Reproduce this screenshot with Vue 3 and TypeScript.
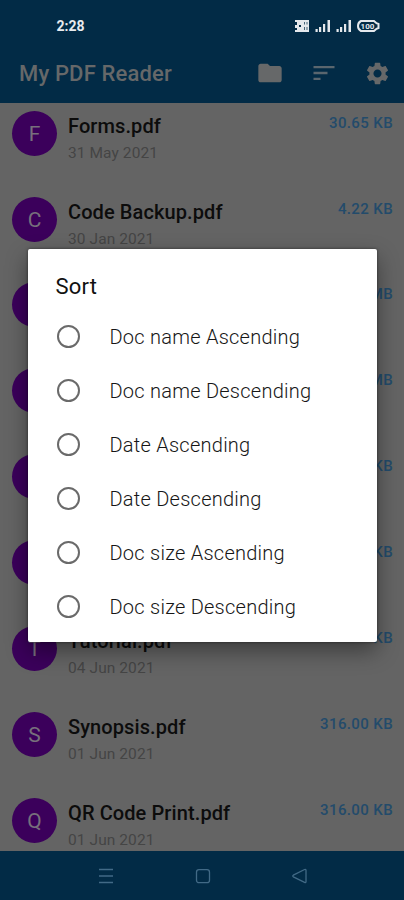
<script setup lang="ts">
interface Doc {
  initial: string
  name: string
  date: string
  size: string
}

const docs: Doc[] = [
  { initial: 'F', name: 'Forms.pdf', date: '31 May 2021', size: '30.65 KB' },
  { initial: 'C', name: 'Code Backup.pdf', date: '30 Jan 2021', size: '4.22 KB' },
  { initial: '', name: '', date: '', size: 'MB' },
  { initial: '', name: '', date: '', size: 'MB' },
  { initial: '', name: '', date: '', size: 'KB' },
  { initial: '', name: '', date: '', size: 'KB' },
  { initial: 'T', name: 'Tutorial.pdf', date: '04 Jun 2021', size: 'KB' },
  { initial: 'S', name: 'Synopsis.pdf', date: '01 Jun 2021', size: '316.00 KB' },
  { initial: 'Q', name: 'QR Code Print.pdf', date: '01 Jun 2021', size: '316.00 KB' },
]

const options: string[] = [
  'Doc name Ascending',
  'Doc name Descending',
  'Date Ascending',
  'Date Descending',
  'Doc size Ascending',
  'Doc size Descending',
]
</script>

<template>
  <div class="screen">
    <header class="top">
      <div class="status">
        <span class="clock">2:28</span>
        <svg class="indicators" width="88" height="16" viewBox="0 0 88 16">
          <g fill="#e4e8ec">
            <path d="M1 2h6v5H5v2h2v5H1v-2h2v-2H1V7h2V4H1z" />
            <path d="M7 2h8v12H7z" />
            <path d="M21.500 11h2.200v3h-2.200zM25 9h2.200v5H25zM29 6h2.200v8H29zM33.500 2H36v12h-2.500z" />
            <path d="M42.500 11h2.200v3h-2.200zM46 9h2.200v5H46zM50 6h2.200v8H50zM54.500 2H57v12h-2.500z" />
          </g>
          <path d="M10.500 4v2.500M13 4v2.500M10.500 9v3M13 9v3" stroke="#022b46" stroke-width=".7" />
          <path d="M67 3h13l2.500 2.200 2 .8v4l-2 .8L80 13H67q-3-1.500-3-5t3-5z" fill="none" stroke="#e4e8ec" stroke-width="2" />
          <text x="73.500" y="11" text-anchor="middle" font-size="8" font-weight="700" fill="#e4e8ec">100</text>
        </svg>
      </div>
      <div class="toolbar">
        <h1 class="title">My PDF Reader</h1>
        <div class="actions">
          <svg width="28" height="28" viewBox="0 0 24 24"><path fill="#666869" d="M10 4H4c-1.100 0-1.990.9-1.990 2L2 18c0 1.100.9 2 2 2h16c1.100 0 2-.9 2-2V8c0-1.100-.9-2-2-2h-8l-2-2z" /></svg>
          <svg width="28" height="28" viewBox="0 0 24 24"><path fill="#5a666e" d="M3 18h6v-2H3v2zM3 6v2h18V6H3zm0 7h12v-2H3v2z" /></svg>
          <svg width="27" height="27" viewBox="0 0 24 24"><path fill="#666869" d="M19.140 12.940c.04-.3.060-.61.060-.94 0-.32-.02-.64-.07-.94l2.030-1.580c.18-.14.230-.41.120-.61l-1.920-3.320c-.12-.22-.37-.29-.59-.22l-2.390.96c-.5-.38-1.030-.7-1.620-.94l-.36-2.540c-.04-.24-.24-.41-.48-.41h-3.840c-.24 0-.43.170-.47.410l-.36 2.540c-.59.240-1.130.570-1.620.94l-2.390-.96c-.22-.08-.47 0-.59.220L2.740 8.870c-.12.210-.08.470.12.610l2.030 1.580c-.05.3-.09.630-.09.940s.02.640.07.940l-2.030 1.580c-.18.140-.23.410-.12.610l1.920 3.320c.12.220.37.290.59.220l2.390-.96c.5.380 1.030.7 1.620.94l.36 2.540c.05.240.24.410.48.410h3.840c.24 0 .44-.17.47-.41l.36-2.540c.59-.24 1.130-.56 1.620-.94l2.390.96c.22.080.47 0 .59-.22l1.920-3.320c.12-.22.070-.47-.12-.61l-2.010-1.580zM12 15.600c-1.980 0-3.600-1.620-3.600-3.600s1.620-3.600 3.600-3.600 3.600 1.620 3.600 3.600-1.620 3.600-3.600 3.600z" /></svg>
        </div>
      </div>
    </header>

    <main class="list">
      <article v-for="(doc, i) in docs" :key="i" class="row">
        <div class="avatar">{{ doc.initial }}</div>
        <div class="info">
          <div class="name">{{ doc.name }}</div>
          <div class="date">{{ doc.date }}</div>
        </div>
        <div class="size">{{ doc.size }}</div>
      </article>
    </main>

    <nav class="nav">
      <svg width="18" height="18" viewBox="0 0 18 18" fill="none" stroke="#426a86" stroke-width="1.500"><path d="M2 2.500h14M2 9h14M2 15.500h14" /></svg>
      <svg width="18" height="18" viewBox="0 0 18 18" fill="none" stroke="#426a86" stroke-width="1.300"><rect x="2.500" y="2.700" width="13" height="13" rx="2.500" /></svg>
      <svg width="18" height="18" viewBox="0 0 18 18" fill="none" stroke="#426a86" stroke-width="1.300" stroke-linejoin="round"><path d="M2.300 8.200 13.600 2.500q1.400-.4 1.400 1v11q0 1.400-1.400.9L2.300 9.800q-1-.8 0-1.600z" /></svg>
    </nav>

    <section class="dialog" role="dialog">
      <h2 class="heading">Sort</h2>
      <label v-for="option in options" :key="option" class="option">
        <span class="radio"></span>
        <span class="label">{{ option }}</span>
      </label>
    </section>
  </div>
</template>

<style>
body {
  background: #646464;
}
</style>

<style scoped>
.screen {
  position: relative;
  display: flex;
  flex-direction: column;
  width: 404px;
  height: 900px;
  overflow: hidden;
  background: #646464;
  font-family: Roboto, "Liberation Sans", sans-serif;
}
.top {
  flex: none;
  height: 103px;
  background: #022b46;
}
.status {
  display: flex;
  align-items: center;
  justify-content: space-between;
  height: 52px;
  padding: 0 22px 0 56.500px;
}
.clock {
  color: #e8eaee;
  font-size: 14px;
  font-weight: 700;
}
.toolbar {
  display: flex;
  align-items: center;
  justify-content: space-between;
  height: 42px;
  padding: 0 13px 0 19px;
}
.title {
  margin: 0;
  color: #666869;
  font-size: 22px;
  font-weight: 500;
  letter-spacing: .15px;
  line-height: 43px;
}
.actions {
  display: flex;
  align-items: center;
  gap: 26px;
}
.list {
  flex: none;
  height: 748px;
  overflow: hidden;
}
.row {
  display: flex;
  height: 78.200px;
  padding: 7.700px 11px 0 12px;
}
.avatar {
  flex: none;
  width: 45px;
  height: 45px;
  border-radius: 50%;
  background: #3b005b;
  color: #77707c;
  font-size: 21px;
  line-height: 47px;
  text-align: center;
}
.info {
  flex: 1;
  padding-left: 11px;
}
.name {
  height: 29px;
  color: #0c0c0c;
  font-size: 20px;
  font-weight: 500;
  letter-spacing: .1px;
  line-height: 30px;
  white-space: nowrap;
}
.date {
  color: #454545;
  font-size: 15.500px;
  letter-spacing: .08px;
  line-height: 26.600px;
}
.size {
  color: #234b6b;
  font-size: 15px;
  font-weight: 500;
  letter-spacing: .38px;
  line-height: 24px;
}
.nav {
  display: flex;
  flex: none;
  align-items: center;
  justify-content: center;
  gap: 79px;
  height: 49px;
  padding-left: 1px;
  background: #022b46;
}
.dialog {
  position: absolute;
  top: 249px;
  left: 28px;
  box-sizing: border-box;
  width: 349px;
  height: 393px;
  padding-top: 14px;
  border-radius: 2px;
  background: #fff;
  box-shadow: 0 9px 22px rgba(0, 0, 0, .4), 0 0 3px rgba(0, 0, 0, .5);
}
.heading {
  height: 46px;
  margin: 0;
  padding-left: 27.500px;
  color: #111;
  font-size: 22px;
  font-weight: 400;
  letter-spacing: .2px;
  line-height: 47px;
}
.option {
  display: flex;
  align-items: center;
  height: 54px;
  padding-left: 29px;
}
.radio {
  box-sizing: border-box;
  width: 23px;
  height: 23px;
  border: 2px solid #6a6a6a;
  border-radius: 50%;
}
.label {
  margin-left: 29.500px;
  padding-top: 2px;
  color: #161616;
  font-size: 20px;
  font-weight: 300;
  letter-spacing: .25px;
}
</style>
